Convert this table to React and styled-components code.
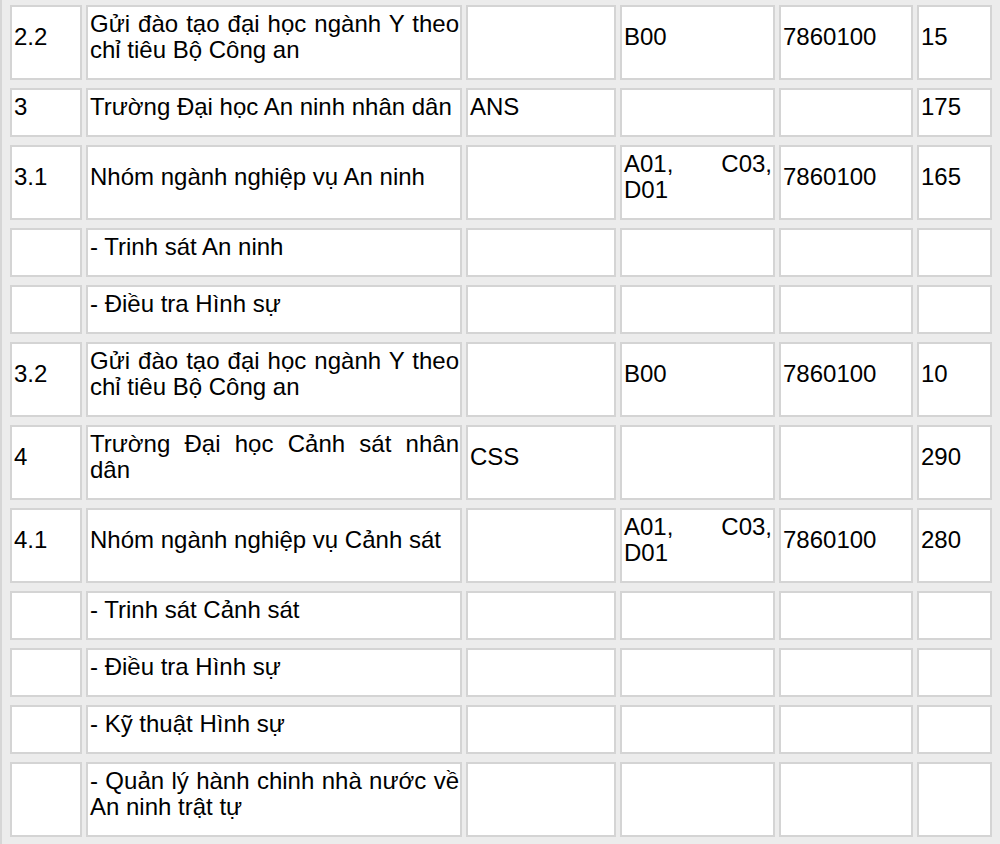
import React from 'react';
import styled, { createGlobalStyle } from 'styled-components';

const Global = createGlobalStyle`
  html, body {
    margin: 0;
    padding: 0;
    background: #ececec;
    overflow: hidden;
  }
`;

const Table = styled.table`
  box-sizing: border-box;
  width: 1000px;
  border-collapse: separate;
  border-spacing: 4px 8px;
  table-layout: fixed;
  margin-top: -3px;
  padding: 0 4px;
  border-left: 2px solid #d6d6d6;
  background: #ececec;
  font-family: "Liberation Sans", Arial, sans-serif;
  font-size: 24px;
  line-height: 26px;
  color: #000;
`;

const Cell = styled.td`
  box-sizing: border-box;
  width: ${(p) => p.$w}px;
  border: 2px solid #d4d4d4;
  background: #fff;
  padding: 4px 1px 15px 2px;
  vertical-align: middle;
  text-align: ${(p) => (p.$justify ? 'justify' : 'left')};
  overflow: hidden;
`;

const widths = [72, 376, 150, 155, 134, 75];
const justify = [false, true, false, true, false, false];

const rows = [
  ['2.2', 'Gửi đào tạo đại học ngành Y theo chỉ tiêu Bộ Công an', '', 'B00', '7860100', '15'],
  ['3', 'Trường Đại học An ninh nhân dân', 'ANS', '', '', '175'],
  ['3.1', 'Nhóm ngành nghiệp vụ An ninh', '', 'A01, C03, D01', '7860100', '165'],
  ['', '- Trinh sát An ninh', '', '', '', ''],
  ['', '- Điều tra Hình sự', '', '', '', ''],
  ['3.2', 'Gửi đào tạo đại học ngành Y theo chỉ tiêu Bộ Công an', '', 'B00', '7860100', '10'],
  ['4', 'Trường Đại học Cảnh sát nhân dân', 'CSS', '', '', '290'],
  ['4.1', 'Nhóm ngành nghiệp vụ Cảnh sát', '', 'A01, C03, D01', '7860100', '280'],
  ['', '- Trinh sát Cảnh sát', '', '', '', ''],
  ['', '- Điều tra Hình sự', '', '', '', ''],
  ['', '- Kỹ thuật Hình sự', '', '', '', ''],
  ['', '- Quản lý hành chinh nhà nước về An ninh trật tự', '', '', '', ''],
];

export default function App() {
  return (
    <>
      <Global />
      <Table>
        <tbody>
          {rows.map((r, i) => (
            <tr key={i}>
              {r.map((c, j) => (
                <Cell key={j} $w={widths[j]} $justify={justify[j]}>
                  {c}
                </Cell>
              ))}
            </tr>
          ))}
        </tbody>
      </Table>
    </>
  );
}
